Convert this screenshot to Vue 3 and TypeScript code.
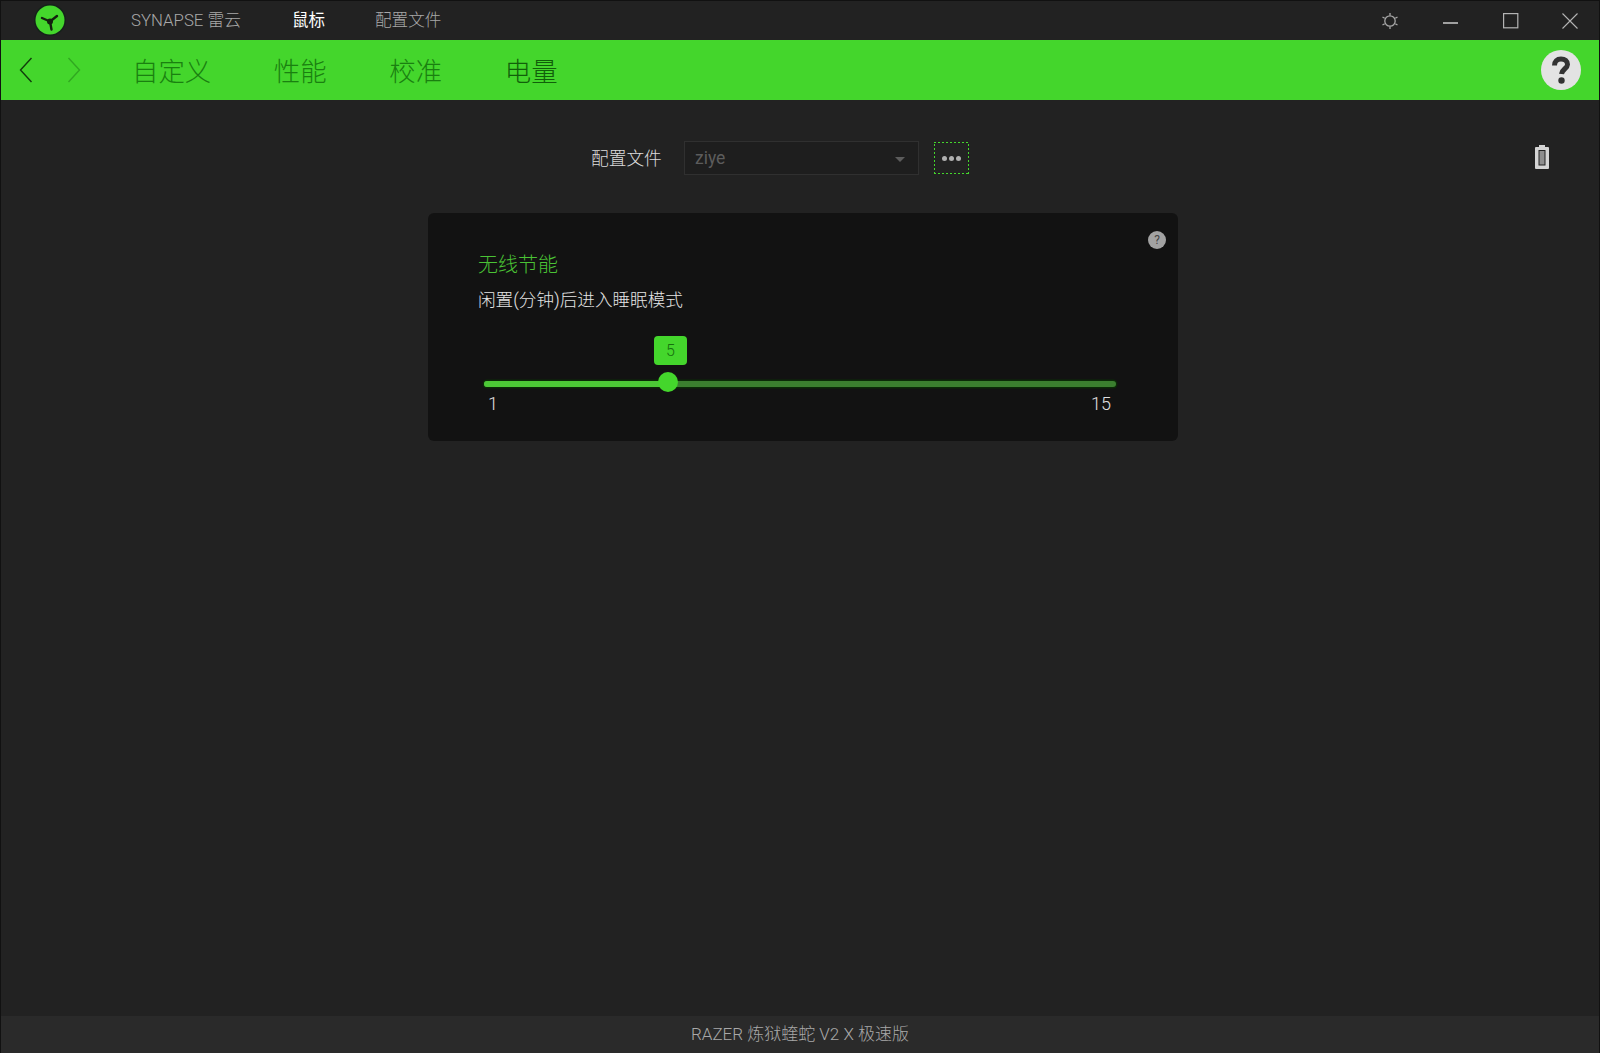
<script setup lang="ts">
const tabs: string[] = ['自定义', '性能', '校准', '电量']
const sliderPct = 29.05
</script>

<template>
  <div class="app">
    <header class="titlebar">
      <div class="logo">
        <svg width="34" height="34" viewBox="-1 -1 34 34">
          <circle cx="16" cy="16" r="16" fill="#15221a" />
          <circle cx="16" cy="16" r="14.500" fill="#44d62c" />
          <path d="M16 17.500 L8 14 M16 17.500 L23 12 M16 17.500 L17.500 25.500" stroke="#14210f" stroke-width="2.400" stroke-linecap="round" fill="none" />
          <circle cx="16" cy="17.500" r="3" fill="#14210f" />
        </svg>
      </div>
      <nav class="topnav">
        <span class="top a">SYNAPSE 雷云</span>
        <span class="top b">鼠标</span>
        <span class="top c">配置文件</span>
      </nav>
      <div class="winctrl">
        <svg class="ctl gear" width="18" height="18" viewBox="0 0 18 18" fill="none" stroke="#a8a8a8" stroke-width="1.3">
          <circle cx="9" cy="9" r="5.200" />
          <path d="M9 1v2.500M9 14.500V17M1.500 5l2.200 1.300M14.300 11.700l2.200 1.300M1.500 13l2.200-1.300M14.300 6.300L16.500 5" />
        </svg>
        <svg class="ctl min" width="16" height="16" viewBox="0 0 16 16" stroke="#c0c0c0" stroke-width="1.6"><path d="M0 9h15" /></svg>
        <svg class="ctl max" width="16" height="16" viewBox="0 0 16 16" fill="none" stroke="#b4b4b4" stroke-width="1.2"><rect x="0.6" y="0.6" width="14.2" height="14.2" /></svg>
        <svg class="ctl close" width="16" height="16" viewBox="0 0 16 16" fill="none" stroke="#b4b4b4" stroke-width="1.1"><path d="M0.500 0.500l15 15M15.500 0.500l-15 15" /></svg>
      </div>
    </header>

    <div class="greenbar">
      <svg class="chev" width="14" height="26" viewBox="0 0 14 26" fill="none" stroke="#123c0c" stroke-width="1.4"><path d="M12.500 1 L1.500 13 L12.500 25" /></svg>
      <svg class="chev fwd" width="14" height="26" viewBox="0 0 14 26" fill="none" stroke="#31a821" stroke-width="1.4"><path d="M1.500 1 L12.500 13 L1.500 25" /></svg>
      <div class="tabs">
        <span v-for="(t, i) in tabs" :key="t" class="tab" :class="{ last: i === 3 }">{{ t }}</span>
      </div>
      <div class="help">
        <svg width="24" height="30" viewBox="0 0 24 30" fill="none">
          <path d="M5.500 10.500 C5.500 6.500 8 4 12 4 C16 4 18.500 6 18.500 9.500 C18.500 13.500 13 14 12.500 19" stroke="#333" stroke-width="5" />
          <circle cx="12.500" cy="25.500" r="3.200" fill="#333" />
        </svg>
      </div>
    </div>

    <main class="content">
      <div class="profile-row">
        <span class="plabel">配置文件</span>
        <div class="select">
          <span>ziye</span>
          <i class="caret"></i>
        </div>
        <div class="more"><b></b><b></b><b></b></div>
        <svg class="battery" width="16" height="24" viewBox="0 0 16 24">
          <path fill-rule="evenodd" fill="#d4d4d4" d="M5 0h6v2h3a1 1 0 0 1 1 1v20a1 1 0 0 1-1 1H2a1 1 0 0 1-1-1V3a1 1 0 0 1 1-1h3zM4.500 5v15.500h7V5z" />
          <rect x="5.500" y="6" width="5" height="13.500" fill="#8e8e8e" />
        </svg>
      </div>

      <section class="card">
        <span class="qmark">?</span>
        <h2 class="ctitle">无线节能</h2>
        <p class="csub">闲置(分钟)后进入睡眠模式</p>
        <div class="slider">
          <div class="track">
            <div class="fill" :style="{ width: sliderPct + '%' }"></div>
            <span class="thumb" :style="{ left: sliderPct + '%' }"></span>
            <span class="bubble">5</span>
          </div>
          <div class="scale"><span>1</span><span>15</span></div>
        </div>
      </section>
    </main>

    <footer class="footer">RAZER 炼狱蝰蛇 V2 X 极速版</footer>
  </div>
</template>

<style>
html, body { margin: 0; padding: 0; background: #222; }
</style>

<style scoped>
.app {
  width: 1600px;
  height: 1053px;
  display: flex;
  flex-direction: column;
  background: #222222;
  font-family: Roboto, "Noto Sans CJK SC", sans-serif;
  overflow: hidden;
  box-sizing: border-box;
  border-left: 1px solid #111;
  border-right: 1px solid #111;
  border-top: 1px solid #111;
}
.titlebar {
  height: 39px;
  flex: none;
  display: flex;
  align-items: center;
  background: #222;
}
.logo { width: 34px; height: 34px; margin-left: 32px; margin-top: -2px; }
.topnav { display: flex; margin-left: 64px; font-size: 16.5px; margin-top: -3px; }
.top { white-space: nowrap; font-weight: 300; }
.a { color: #a8a8a8; width: 161px; font-size: 16.8px; }
.b { color: #ffffff; width: 83px; font-weight: 400; }
.c { color: #a8a8a8; font-size: 16.6px; }
.winctrl { margin-left: auto; display: flex; align-items: center; padding-right: 21px; }
.ctl { display: block; }
.gear { margin-right: 44px; margin-left: 0; }
.min { margin-right: 44px; margin-top: 2px; }
.max { margin-right: 43px; }
.greenbar {
  height: 60px;
  flex: none;
  display: flex;
  align-items: center;
  background: #44d62c;
}
.chev { flex: none; margin-left: 18px; }
.chev.fwd { margin-left: 34px; }
.tabs { display: flex; margin-left: 51px; }
.tab { font-size: 26.4px; color: #1a8010; margin-right: 62.7px; font-weight: 300; white-space: nowrap; margin-top: -2px; }
.tab.last { color: #115f0a; margin-right: 0; }
.help {
  margin-left: auto;
  margin-right: 18px;
  width: 40px;
  height: 40px;
  border-radius: 50%;
  background: #e3e3e3;
  display: flex;
  align-items: center;
  justify-content: center;
}
.content { flex: 1; display: flex; flex-direction: column; }
.profile-row {
  position: relative;
  display: flex;
  align-items: center;
  height: 34px;
  margin-top: 41px;
  padding-left: 590px;
}
.plabel { font-size: 17.7px; color: #dcdcdc; width: 93px; margin-top: -3px; font-weight: 300; }
.select {
  box-sizing: border-box;
  width: 235px;
  height: 34px;
  border: 1px solid #303030;
  background: #1e1e1e;
  display: flex;
  align-items: center;
  justify-content: space-between;
  padding: 0 12px 0 10px;
  color: #5c5c5c;
  font-size: 17.5px;
}
.caret {
  width: 0;
  height: 0;
  border-left: 5px solid transparent;
  border-right: 5px solid transparent;
  border-top: 5px solid #5c5c5c;
  margin: 2px 1px 0 0;
}
.more {
  box-sizing: border-box;
  width: 35px;
  height: 32px;
  margin-left: 15px;
  background-image:
    repeating-linear-gradient(90deg, #44d62c 0 2px, transparent 2px 4px),
    repeating-linear-gradient(90deg, #44d62c 0 2px, transparent 2px 4px),
    repeating-linear-gradient(0deg, #44d62c 0 2px, transparent 2px 4px),
    repeating-linear-gradient(0deg, #44d62c 0 2px, transparent 2px 4px);
  background-size: 100% 1px, 100% 1px, 1px 100%, 1px 100%;
  background-position: 0 0, 0 100%, 0 0, 100% 0;
  background-repeat: no-repeat;
  display: flex;
  align-items: center;
  justify-content: center;
  gap: 2px;
}
.more b { width: 5px; height: 5px; border-radius: 50%; background: #b0b0b0; }
.battery { position: absolute; left: 1533px; top: 4px; }
.card {
  position: relative;
  box-sizing: border-box;
  width: 750px;
  height: 228px;
  margin: 38px 0 0 427px;
  padding: 39px 50px 0;
  background: #121212;
  border-radius: 6px;
}
.qmark {
  position: absolute;
  top: 18px;
  right: 12px;
  width: 18px;
  height: 18px;
  border-radius: 50%;
  background: #a2a2a2;
  color: #444;
  font-size: 12px;
  line-height: 18px;
  text-align: center;
}
.ctitle { margin: 0; font-size: 20px; font-weight: 300; color: #4ac235; line-height: 26px; }
.csub { margin: 9px 0 0; font-size: 17.6px; color: #e4e4e4; line-height: 26px; font-weight: 300; }
.slider { margin: 0 0 0 6px; padding-top: 68px; width: 632px; }
.track { position: relative; height: 6px; border-radius: 3px; background: #3b7f2f; box-shadow: 0 0 0 1.500px #0b2a07; }
.fill { height: 100%; border-radius: 3px; background: #4cc936; }
.thumb {
  position: absolute;
  top: -9px;
  width: 20px;
  height: 20px;
  margin-left: -10px;
  border-radius: 50%;
  background: #44d62c;
}
.bubble {
  position: absolute;
  left: 170px;
  top: -45px;
  width: 33px;
  height: 29px;
  border-radius: 4px;
  background: #44d62c;
  color: #17700e;
  font-size: 16px;
  line-height: 29px;
  text-align: center;
  font-weight: 300;
}
.scale {
  display: flex;
  justify-content: space-between;
  padding: 6px 5px 0 4px;
  font-size: 18px;
  line-height: 22px;
  color: #e0e0e0;
  font-weight: 300;
}
.footer {
  flex: none;
  height: 37px;
  background: #2a2a2a;
  color: #a8a8a8;
  font-size: 17px;
  line-height: 37px;
  text-align: center;
  font-weight: 300;
}
</style>
